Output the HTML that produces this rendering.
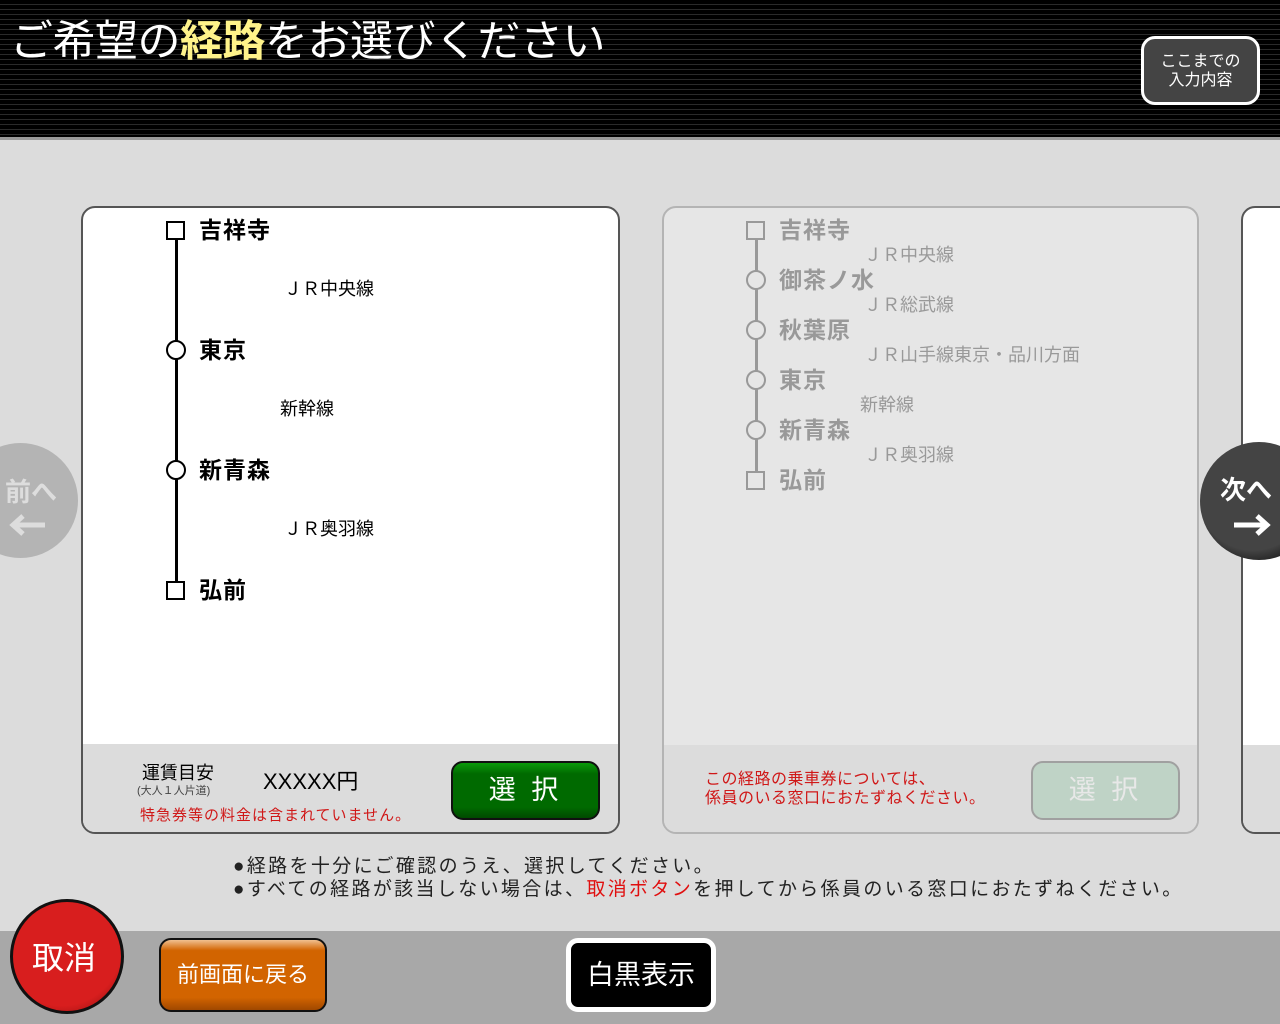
<!DOCTYPE html>
<html><head><meta charset="utf-8"><style>
*{margin:0;padding:0;box-sizing:border-box}
body{width:1280px;height:1024px;position:relative;overflow:hidden;background:#dcdcdc;font-family:"Liberation Sans","Noto Sans CJK JP",sans-serif}
.a{position:absolute;white-space:nowrap}
#hdr{left:0;top:0;width:1280px;height:140px;background:repeating-linear-gradient(180deg,#000 0,#000 4px,#2a2a2a 4px,#2a2a2a 5px);border-bottom:3px solid #9a9a9a}
.card{position:absolute;top:206px;height:628px;border-radius:14px;overflow:hidden}
.st{position:absolute;font-weight:bold;font-size:23px;line-height:26px;letter-spacing:1px}
.ln{position:absolute;font-size:18px;line-height:22px}
.sq{position:absolute;width:19px;height:19px;border:2px solid}
.ci{position:absolute;width:20px;height:20px;border:2px solid;border-radius:50%}
</style></head><body>
<div id="hdr" class="a"></div>
<div class="a" style="left:10px;top:14px;font-size:43px;color:#fff;line-height:56px;letter-spacing:-0.5px">ご希望の<b style="color:#fff38a">経路</b>をお選びください</div>
<div class="a" style="left:1141px;top:36px;width:119px;height:69px;border:3px solid #fff;border-radius:14px;background:#444;color:#fff;font-size:16px;line-height:19px;text-align:center;padding-top:13px">ここまでの<br>入力内容</div>

<!-- card1 -->
<div class="card" style="left:81px;width:539px;border:2px solid #555;background:#fff">
  <div class="a" style="left:0;top:536px;width:100%;height:100px;background:#dcdcdc"></div>
  <div class="a" style="left:92px;top:22px;width:3px;height:360px;background:#000"></div>
  <div class="sq" style="left:83px;top:13px;border-color:#000;background:#fff"></div>
  <div class="ci" style="left:83px;top:132px;border-color:#000;background:#fff"></div>
  <div class="ci" style="left:83px;top:252px;border-color:#000;background:#fff"></div>
  <div class="sq" style="left:83px;top:373px;border-color:#000;background:#fff"></div>
  <div class="st" style="left:116px;top:9px">吉祥寺</div>
  <div class="ln" style="left:201px;top:70px">ＪＲ中央線</div>
  <div class="st" style="left:116px;top:129px">東京</div>
  <div class="ln" style="left:197px;top:190px">新幹線</div>
  <div class="st" style="left:116px;top:249px">新青森</div>
  <div class="ln" style="left:201px;top:310px">ＪＲ奥羽線</div>
  <div class="st" style="left:116px;top:369px">弘前</div>
  <div class="a" style="left:59px;top:551px;font-size:18px">運賃目安</div>
  <div class="a" style="left:54px;top:574px;font-size:11px;color:#444">(大人１人片道)</div>
  <div class="a" style="left:180px;top:556px;font-size:22px">XXXXX円</div>
  <div class="a" style="left:57px;top:596px;font-size:15px;letter-spacing:1px;color:#d01818">特急券等の料金は含まれていません。</div>
  <div class="a" style="left:368px;top:553px;width:149px;height:59px;border:2px solid #111;border-radius:12px;background:linear-gradient(#0a9a0a,#006a00 20%,#006a00 80%,#004a00);color:#fff;font-size:27px;text-align:center;line-height:54px;letter-spacing:4px">選 択</div>
</div>

<!-- card2 -->
<div class="card" style="left:662px;width:537px;border:2px solid #b4b4b4;background:#e6e6e6;color:#999">
  <div class="a" style="left:0;top:537px;width:100%;height:100px;background:#dcdcdc"></div>
  <div class="a" style="left:91px;top:22px;width:3px;height:250px;background:#999"></div>
  <div class="sq" style="left:82px;top:13px;border-color:#999;background:#e6e6e6"></div>
  <div class="ci" style="left:82px;top:62px;border-color:#999;background:#e6e6e6"></div>
  <div class="ci" style="left:82px;top:112px;border-color:#999;background:#e6e6e6"></div>
  <div class="ci" style="left:82px;top:162px;border-color:#999;background:#e6e6e6"></div>
  <div class="ci" style="left:82px;top:212px;border-color:#999;background:#e6e6e6"></div>
  <div class="sq" style="left:82px;top:263px;border-color:#999;background:#e6e6e6"></div>
  <div class="st" style="left:115px;top:9px">吉祥寺</div>
  <div class="ln" style="left:200px;top:36px">ＪＲ中央線</div>
  <div class="st" style="left:115px;top:59px">御茶ノ水</div>
  <div class="ln" style="left:200px;top:86px">ＪＲ総武線</div>
  <div class="st" style="left:115px;top:109px">秋葉原</div>
  <div class="ln" style="left:200px;top:136px">ＪＲ山手線東京・品川方面</div>
  <div class="st" style="left:115px;top:159px">東京</div>
  <div class="ln" style="left:196px;top:186px">新幹線</div>
  <div class="st" style="left:115px;top:209px">新青森</div>
  <div class="ln" style="left:200px;top:236px">ＪＲ奥羽線</div>
  <div class="st" style="left:115px;top:259px">弘前</div>
  <div class="a" style="left:41px;top:562px;font-size:16px;line-height:19px;letter-spacing:0.5px;color:#d01818">この経路の乗車券については、<br>係員のいる窓口におたずねください。</div>
  <div class="a" style="left:367px;top:553px;width:149px;height:59px;border:2px solid #a0a0a0;border-radius:12px;background:#bfd3c6;color:#e8e8e8;font-size:27px;text-align:center;line-height:54px;letter-spacing:4px">選 択</div>
</div>

<!-- card3 -->
<div class="card" style="left:1241px;width:80px;border:2px solid #555;background:#fff">
  <div class="a" style="left:0;top:537px;width:100%;height:100px;background:#dcdcdc"></div>
</div>

<!-- prev/next -->
<div class="a" style="left:-37px;top:443px;width:115px;height:115px;border-radius:50%;background:#b4b4b4"></div>
<div class="a" style="left:5px;top:476px;font-size:26px;font-weight:bold;color:#ddd;line-height:32px">前へ</div>
<svg class="a" style="left:8px;top:513px" width="40" height="24" viewBox="0 0 40 24"><path d="M37 12H6M15 3L5 12L15 21" stroke="#ddd" stroke-width="5" fill="none"/></svg>
<div class="a" style="left:1200px;top:442px;width:118px;height:118px;border-radius:50%;background:radial-gradient(circle at 45% 45%,#444 60%,#222 75%,#666 90%);"></div>
<div class="a" style="left:1220px;top:474px;font-size:26px;font-weight:bold;color:#fff;line-height:32px">次へ</div>
<svg class="a" style="left:1232px;top:513px" width="40" height="24" viewBox="0 0 40 24"><path d="M2 12H33M25 3L35 12L25 21" stroke="#fff" stroke-width="5" fill="none"/></svg>

<div class="a" style="left:233px;top:855px;font-size:19px;line-height:23px;letter-spacing:2.35px;color:#222">●経路を十分にご確認のうえ、選択してください。<br>●すべての経路が該当しない場合は、<span style="color:#e01010">取消ボタン</span>を押してから係員のいる窓口におたずねください。</div>

<!-- bottom bar -->
<div class="a" style="left:0;top:931px;width:1280px;height:93px;background:#a8a8a8"></div>
<div class="a" style="left:10px;top:899px;width:114px;height:115px;border-radius:50%;border:3px solid #111;background:radial-gradient(circle at 45% 40%,#d81e1e 68%,#9a1010 90%);"></div>
<div class="a" style="left:32px;top:933px;font-size:32px;color:#fff">取消</div>
<div class="a" style="left:159px;top:938px;width:168px;height:74px;border:2px solid #111;border-radius:12px;background:linear-gradient(#f0c090,#d26400 15%,#d26400 82%,#a04800);color:#fff;font-size:22px;text-align:center;line-height:70px">前画面に戻る</div>
<div class="a" style="left:566px;top:938px;width:150px;height:74px;border:5px solid #fff;border-radius:12px;background:#000;color:#fff;font-size:27px;text-align:center;line-height:64px">白黒表示</div>
</body></html>
